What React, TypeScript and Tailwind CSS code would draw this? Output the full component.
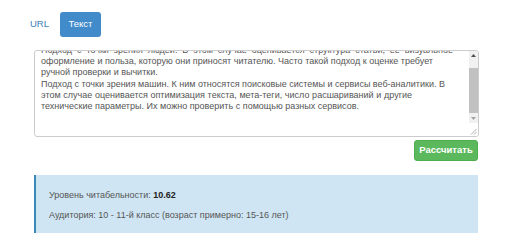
const lines = [
  { text: 'Подход с точки зрения людей. В этом случае оценивается структура статьи, ее визуальное', cls: 'w-[412px] text-justify [text-align-last:justify]' },
  { text: 'оформление и польза, которую они приносят читателю. Часто такой подход к оценке требует', cls: 'w-[392px] text-justify [text-align-last:justify]' },
  { text: 'ручной проверки и вычитки.', cls: 'whitespace-nowrap' },
  { text: 'Подход с точки зрения машин. К ним относятся поисковые системы и сервисы веб-аналитики. В', cls: 'w-[404px] text-justify [text-align-last:justify]' },
  { text: 'этом случае оценивается оптимизация текста, мета-теги, число расшариваний и другие', cls: 'w-[371px] text-justify [text-align-last:justify]' },
  { text: 'технические параметры. Их можно проверить с помощью разных сервисов.', cls: 'w-[318px] text-justify [text-align-last:justify]' },
];

function FakeScrollbar() {
  return (
    <div className="flex w-[9px] shrink-0 flex-col">
      <div className="flex h-[72px] flex-col items-center bg-[#f1f1f1]">
        <div className="flex h-[9px] w-full items-center justify-center">
          <svg width="5" height="3" viewBox="0 0 5 3">
            <path d="M0 3 L2.5 0 L5 3 Z" fill="#505050" />
          </svg>
        </div>
        <div className="mt-[8px] h-[45px] w-full bg-[#c1c1c1]" />
        <div className="mt-auto flex h-[9px] w-full items-center justify-center">
          <svg width="5" height="3" viewBox="0 0 5 3">
            <path d="M0 0 L2.5 3 L5 0 Z" fill="#a3a3a3" />
          </svg>
        </div>
      </div>
      <div className="flex flex-1 items-end justify-end bg-white pb-[1px] pr-[1px]">
        <svg width="7" height="7" viewBox="0 0 7 7">
          <path d="M6.5 1 L1 6.5 M6.5 4 L4 6.5" stroke="#999" strokeWidth="0.8" />
        </svg>
      </div>
    </div>
  );
}

export default function App() {
  return (
    <div className="h-[244px] w-[512px] overflow-hidden bg-white font-['Liberation_Sans',Arial,sans-serif]">
      {/* Tabs */}
      <div className="ml-[30px] mt-[12px] flex h-[25px] items-center">
        <span className="w-[30px] text-[9.5px] text-[#3d7fb8]">URL</span>
        <button className="h-[25px] w-[41px] rounded-[3px] bg-[#428bca] text-[9.5px] text-white">
          Текст
        </button>
      </div>

      <div className="ml-[34px] mt-[13px] w-[445px]">
        {/* Textarea */}
        <div className="flex h-[87px] overflow-hidden rounded-[3px] border border-[#cccccc]">
          <div className="flex-1 overflow-hidden pl-[6px]">
            <div className="-mt-[6px] text-[9px] leading-[11.2px] text-[#555555]">
              {lines.map((line) => (
                <div key={line.text} className={`${line.cls} h-[11.2px]`}>
                  {line.text}
                </div>
              ))}
            </div>
          </div>
          <FakeScrollbar />
        </div>

        {/* Submit */}
        <div className="mt-[3px] flex justify-end pr-[1px]">
          <button className="h-[21px] w-[64px] rounded-[3px] border border-[#4cae4c] bg-[#5cb85c] text-[9.5px] font-semibold text-white">
            Рассчитать
          </button>
        </div>

        {/* Result */}
        <div className="mr-[1px] mt-[14px] h-[58px] border-l-2 border-[#3a8ab8] bg-[#cfe5f3] pl-[13px] pt-[15px] text-[9px] text-[#555555]">
          <div className="leading-[11px]">
            Уровень читабельности: <b className="text-[#222]">10.62</b>
          </div>
          <div className="mt-[9px] leading-[11px]">
            Аудитория: 10 - 11-й класс (возраст примерно: 15-16 лет)
          </div>
        </div>
      </div>
    </div>
  );
}
